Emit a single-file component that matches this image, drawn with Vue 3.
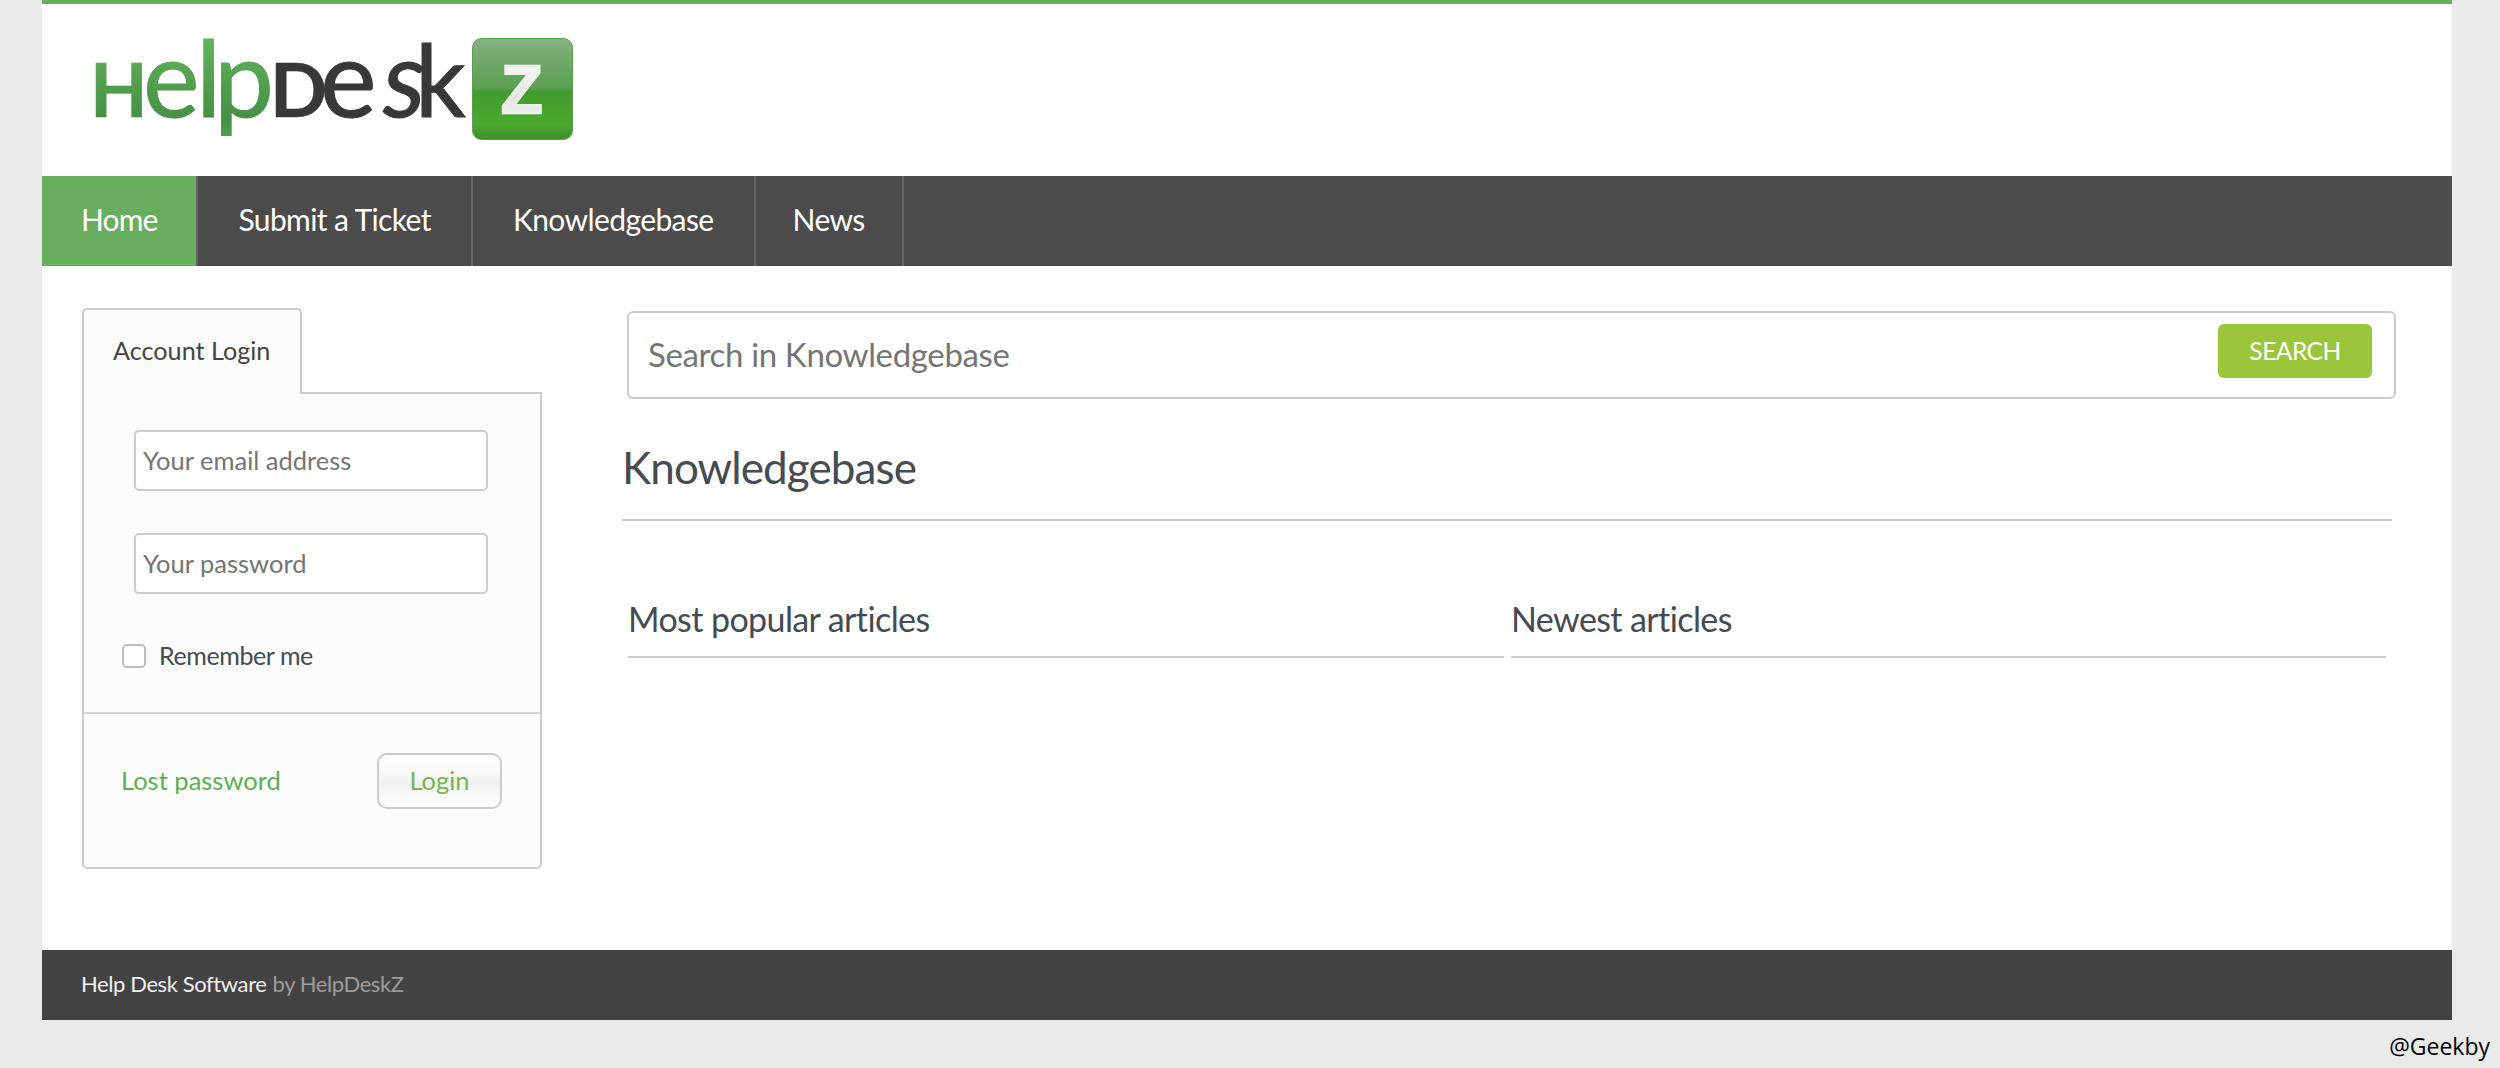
<script setup>
const navItems = [
  { label: 'Home', active: true },
  { label: 'Submit a Ticket' },
  { label: 'Knowledgebase' },
  { label: 'News' }
]
</script>

<template>
  <div class="page">
    <div class="wrapper">
      <header class="header">
        <svg class="logo" viewBox="90 36 490 110" width="490" height="110" role="img" aria-label="HelpDeskZ">
          <defs>
            <linearGradient id="lg" gradientUnits="userSpaceOnUse" x1="0" y1="37" x2="0" y2="142">
              <stop offset="0" stop-color="#66b45c" />
              <stop offset="0.5" stop-color="#4f9c4c" />
              <stop offset="0.8" stop-color="#468f44" />
              <stop offset="1" stop-color="#58a651" />
            </linearGradient>
            <linearGradient id="bg" x1="0" y1="0" x2="0" y2="1">
              <stop offset="0" stop-color="#86b181" />
              <stop offset="0.5" stop-color="#58a04f" />
              <stop offset="0.52" stop-color="#429a2f" />
              <stop offset="0.85" stop-color="#4aa92f" />
              <stop offset="1" stop-color="#3e8f2b" />
            </linearGradient>
            <linearGradient id="zg" x1="0" y1="0" x2="0" y2="1">
              <stop offset="0" stop-color="#ffffff" />
              <stop offset="0.6" stop-color="#e2e6e0" />
              <stop offset="1" stop-color="#f2f2f2" />
            </linearGradient>
            <filter id="soft" x="-5%" y="-5%" width="110%" height="110%">
              <feGaussianBlur stdDeviation="0.6" />
            </filter>
          </defs>
          <g class="mark" filter="url(#soft)">
            <text y="117" font-size="107" stroke-width="1">
              <tspan x="90" font-size="75" font-weight="700" fill="url(#lg)" stroke="url(#lg)" stroke-width="0.5">H</tspan>
              <tspan x="143" fill="url(#lg)" stroke="url(#lg)">e</tspan>
              <tspan x="196" fill="url(#lg)" stroke="url(#lg)">l</tspan>
              <tspan x="214" fill="url(#lg)" stroke="url(#lg)">p</tspan>
              <tspan x="270" font-size="75" font-weight="700" fill="#38383a" stroke="#38383a" stroke-width="0.5">D</tspan>
              <tspan x="320" fill="#38383a" stroke="#38383a">e</tspan>
              <tspan x="383" font-style="italic" fill="#38383a" stroke="#38383a">s</tspan>
              <tspan x="415" font-size="100" fill="#38383a" stroke="#38383a">k</tspan>
            </text>
            <rect x="472.5" y="38.5" width="100" height="101" rx="9" fill="url(#bg)" stroke="#5a9f50" />
            <text class="z" x="501" y="113" font-size="68" font-weight="700" fill="url(#zg)" stroke="#eef0ec" stroke-width="2.5">Z</text>
          </g>
        </svg>
      </header>

      <nav class="nav">
        <a v-for="item in navItems" :key="item.label" class="nav-item" :class="{ active: item.active }">{{ item.label }}</a>
      </nav>

      <main class="content">
        <aside class="sidebar">
          <div class="tab">Account Login</div>
          <div class="panel">
            <div class="fields">
              <input class="field" type="text" placeholder="Your email address" />
              <input class="field" type="password" placeholder="Your password" />
            </div>
            <label class="remember">
              <span class="check"></span>
              <span>Remember me</span>
            </label>
            <div class="panel-foot">
              <a class="lost">Lost password</a>
              <button class="login" type="button">Login</button>
            </div>
          </div>
        </aside>

        <section class="kb">
          <div class="search">
            <input class="search-input" type="text" placeholder="Search in Knowledgebase" />
            <button class="search-btn" type="button">SEARCH</button>
          </div>
          <h1 class="title">Knowledgebase</h1>
          <div class="cols">
            <h2 class="col-title">Most popular articles</h2>
            <h2 class="col-title">Newest articles</h2>
          </div>
        </section>
      </main>

      <footer class="footer">
        <span class="foot-main">Help Desk Software</span>
        <span class="foot-by">by HelpDeskZ</span>
      </footer>
    </div>
    <div class="credit">@Geekby</div>
  </div>
</template>

<style>
html, body { margin: 0; background: #eaeaea; }
</style>

<style scoped>
.page {
  width: 2500px;
  height: 1068px;
  background: #eaeaea;
  font-family: Lato, "Open Sans", sans-serif;
  overflow: hidden;
}
.wrapper {
  width: 2410px;
  margin-left: 42px;
  background: #fff;
  border-top: 4px solid #66b05c;
}
.header {
  height: 172px;
  box-sizing: border-box;
  padding: 32px 0 0 48px;
}
.logo { display: block; }
.mark text { font-family: Lato, sans-serif; }
.mark .z { font-family: "Liberation Sans", sans-serif; }

.nav {
  display: flex;
  height: 90px;
  background: #4b4b4b;
}
.nav-item {
  display: flex;
  align-items: center;
  box-sizing: border-box;
  padding: 0 40px 5px;
  border-right: 2px solid #666;
  color: #fff;
  font-size: 30px;
  letter-spacing: -0.6px;
}
.nav-item:last-child { padding: 0 37px 5px; }
.nav-item.active {
  background: #68ae5e;
  padding-left: 39px;
  padding-right: 39px;
  letter-spacing: -0.9px;
}

.content {
  display: flex;
  padding: 42px 60px 81px 40px;
}
.sidebar {
  width: 460px;
  flex: none;
  margin-right: 80px;
}
.tab {
  position: relative;
  z-index: 1;
  box-sizing: border-box;
  width: 220px;
  height: 86px;
  margin-bottom: -2px;
  padding: 25px 0 0 29px;
  background: #fcfcfc;
  border: 2px solid #ccc;
  border-bottom: 0;
  border-radius: 5px 5px 0 0;
  color: #444;
  font-size: 25.2px;
  line-height: 30px;
}
.panel {
  background: #fcfcfc;
  border: 2px solid #ccc;
  border-radius: 0 0 5px 5px;
  padding-top: 36px;
}
.fields {
  display: flex;
  flex-direction: column;
  gap: 42px;
  margin-left: 50px;
}
.field {
  box-sizing: border-box;
  width: 354px;
  height: 61px;
  padding: 0 7px 2px;
  background: #fff;
  border: 2px solid #ccc;
  border-radius: 5px;
  outline: none;
  font-family: inherit;
  font-size: 25.5px;
  color: #444;
}
.field::placeholder { color: #757575; opacity: 1; }
.remember {
  display: flex;
  align-items: center;
  gap: 13px;
  height: 24px;
  margin: 50px 0 44px 38px;
  color: #444b52;
  font-size: 25px;
  letter-spacing: -0.4px;
}
.remember span:last-child { margin-top: -2px; }
.check {
  box-sizing: border-box;
  width: 24px;
  height: 24px;
  background: #fff;
  border: 2px solid #bdbdbd;
  border-radius: 5px;
}
.panel-foot {
  display: flex;
  align-items: center;
  justify-content: space-between;
  padding: 39px 38px 58px 37px;
  border-top: 2px solid #d2d2d6;
}
.lost {
  color: #5cb04f;
  font-size: 25.5px;
  margin-top: -2px;
}
.login {
  box-sizing: border-box;
  width: 125px;
  height: 56px;
  padding: 0 0 2px;
  background: linear-gradient(#fff 0%, #f9f9f9 35%, #efefef 55%, #f7f7f7 70%, #fff 100%);
  border: 2px solid #ccc;
  border-radius: 10px;
  color: #78b551;
  font-family: inherit;
  font-size: 25.5px;
}

.kb {
  flex: 1;
  min-width: 0;
}
.search {
  display: flex;
  align-items: center;
  box-sizing: border-box;
  height: 88px;
  margin: 3px -4px 0 5px;
  padding: 0 22px 0 19px;
  background: #fff;
  border: 2px solid #ccc;
  border-radius: 6px;
}
.search-input {
  flex: 1;
  min-width: 0;
  padding: 0 0 3px;
  border: 0;
  outline: none;
  background: transparent;
  font-family: inherit;
  font-size: 33px;
  letter-spacing: -0.35px;
}
.search-input::placeholder { color: #757575; opacity: 1; }
.search-btn {
  box-sizing: border-box;
  width: 154px;
  height: 54px;
  margin-top: -8px;
  padding: 0 0 2px;
  background: #9cc63a;
  border: 0;
  border-radius: 6px;
  color: #fff;
  font-family: inherit;
  font-size: 24.5px;
  letter-spacing: -0.5px;
}
.title {
  margin: 34px 0 0;
  padding: 0 0 18px;
  border-bottom: 2px solid #ccc;
  color: #474c52;
  font-size: 44px;
  font-weight: 400;
  letter-spacing: -0.9px;
  line-height: 68px;
  height: 68px;
}
.cols {
  display: grid;
  grid-template-columns: 876px 875px;
  gap: 7px;
  margin: 65px 0 0 6px;
}
.col-title {
  margin: 0;
  height: 70px;
  line-height: 66px;
  border-bottom: 2px solid #ccc;
  color: #444b52;
  font-size: 34px;
  font-weight: 400;
  letter-spacing: -0.6px;
}

.footer {
  display: flex;
  align-items: center;
  gap: 6px;
  box-sizing: border-box;
  height: 70px;
  padding: 0 0 3px 39px;
  background: #434343;
  font-size: 22px;
  letter-spacing: -0.4px;
}
.foot-main { color: #f0f0f0; }
.foot-by { color: #9d9d9d; }

.credit {
  padding: 10px 10px 0 0;
  text-align: right;
  color: #000;
  font-family: "Open Sans", sans-serif;
  font-size: 23px;
  line-height: 32px;
}
</style>
